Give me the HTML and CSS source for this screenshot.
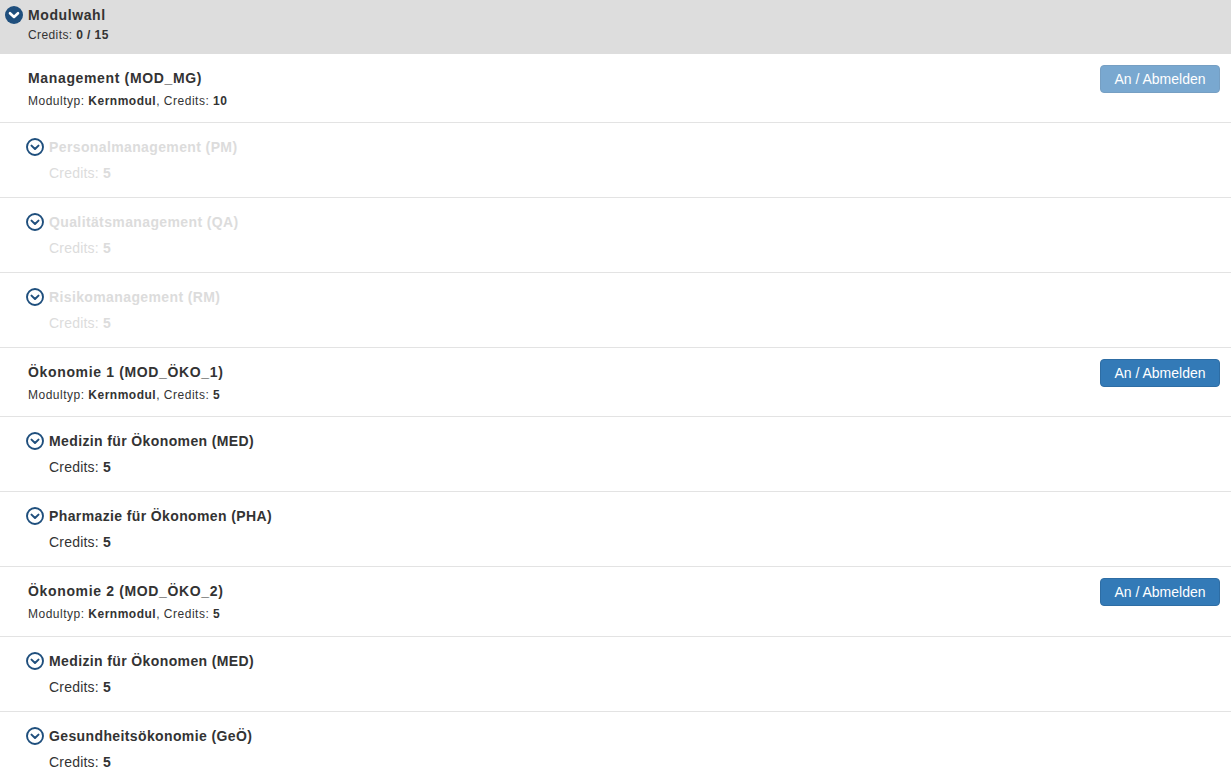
FILE: index.html
```html
<!DOCTYPE html>
<html lang="de">
<head>
<meta charset="utf-8">
<title>Modulwahl</title>
<link rel="stylesheet" href="styles.css">
</head>
<body>
<div class="panel">
  <div class="panel-head">
    <div class="head-title">
      <svg class="icon-solid" width="18" height="18" viewBox="0 0 18 18"><circle cx="9" cy="9" r="9" fill="#1f4f7d"/><path d="M5 7.2 L9 11 L13 7.2" fill="none" stroke="#fff" stroke-width="2.6" stroke-linecap="round" stroke-linejoin="round"/></svg>
      <span>Modulwahl</span>
    </div>
    <div class="head-sub">Credits: <b>0 / 15</b></div>
  </div>

  <div class="module">
    <div class="module-info">
      <div class="module-title">Management (MOD_MG)</div>
      <div class="module-sub">Modultyp: <b>Kernmodul</b>, Credits: <b>10</b></div>
    </div>
    <button class="btn disabled">An / Abmelden</button>
  </div>
  <div class="course muted">
    <div class="course-title"><svg class="icon-outline" width="18" height="18" viewBox="0 0 18 18"><circle cx="9" cy="9" r="8" fill="none" stroke="#1f4f7d" stroke-width="1.9"/><path d="M5.5 7.6 L9 11 L12.5 7.6" fill="none" stroke="#1f4f7d" stroke-width="2" stroke-linecap="round" stroke-linejoin="round"/></svg><span>Personalmanagement (PM)</span></div>
    <div class="course-sub">Credits: <b>5</b></div>
  </div>
  <div class="course muted">
    <div class="course-title"><svg class="icon-outline" width="18" height="18" viewBox="0 0 18 18"><circle cx="9" cy="9" r="8" fill="none" stroke="#1f4f7d" stroke-width="1.9"/><path d="M5.5 7.6 L9 11 L12.5 7.6" fill="none" stroke="#1f4f7d" stroke-width="2" stroke-linecap="round" stroke-linejoin="round"/></svg><span>Qualitätsmanagement (QA)</span></div>
    <div class="course-sub">Credits: <b>5</b></div>
  </div>
  <div class="course muted">
    <div class="course-title"><svg class="icon-outline" width="18" height="18" viewBox="0 0 18 18"><circle cx="9" cy="9" r="8" fill="none" stroke="#1f4f7d" stroke-width="1.9"/><path d="M5.5 7.6 L9 11 L12.5 7.6" fill="none" stroke="#1f4f7d" stroke-width="2" stroke-linecap="round" stroke-linejoin="round"/></svg><span>Risikomanagement (RM)</span></div>
    <div class="course-sub">Credits: <b>5</b></div>
  </div>

  <div class="module">
    <div class="module-info">
      <div class="module-title">Ökonomie 1 (MOD_ÖKO_1)</div>
      <div class="module-sub">Modultyp: <b>Kernmodul</b>, Credits: <b>5</b></div>
    </div>
    <button class="btn">An / Abmelden</button>
  </div>
  <div class="course">
    <div class="course-title"><svg class="icon-outline" width="18" height="18" viewBox="0 0 18 18"><circle cx="9" cy="9" r="8" fill="none" stroke="#1f4f7d" stroke-width="1.9"/><path d="M5.5 7.6 L9 11 L12.5 7.6" fill="none" stroke="#1f4f7d" stroke-width="2" stroke-linecap="round" stroke-linejoin="round"/></svg><span>Medizin für Ökonomen (MED)</span></div>
    <div class="course-sub">Credits: <b>5</b></div>
  </div>
  <div class="course">
    <div class="course-title"><svg class="icon-outline" width="18" height="18" viewBox="0 0 18 18"><circle cx="9" cy="9" r="8" fill="none" stroke="#1f4f7d" stroke-width="1.9"/><path d="M5.5 7.6 L9 11 L12.5 7.6" fill="none" stroke="#1f4f7d" stroke-width="2" stroke-linecap="round" stroke-linejoin="round"/></svg><span>Pharmazie für Ökonomen (PHA)</span></div>
    <div class="course-sub">Credits: <b>5</b></div>
  </div>

  <div class="module module-last">
    <div class="module-info">
      <div class="module-title">Ökonomie 2 (MOD_ÖKO_2)</div>
      <div class="module-sub">Modultyp: <b>Kernmodul</b>, Credits: <b>5</b></div>
    </div>
    <button class="btn">An / Abmelden</button>
  </div>
  <div class="course">
    <div class="course-title"><svg class="icon-outline" width="18" height="18" viewBox="0 0 18 18"><circle cx="9" cy="9" r="8" fill="none" stroke="#1f4f7d" stroke-width="1.9"/><path d="M5.5 7.6 L9 11 L12.5 7.6" fill="none" stroke="#1f4f7d" stroke-width="2" stroke-linecap="round" stroke-linejoin="round"/></svg><span>Medizin für Ökonomen (MED)</span></div>
    <div class="course-sub">Credits: <b>5</b></div>
  </div>
  <div class="course">
    <div class="course-title"><svg class="icon-outline" width="18" height="18" viewBox="0 0 18 18"><circle cx="9" cy="9" r="8" fill="none" stroke="#1f4f7d" stroke-width="1.9"/><path d="M5.5 7.6 L9 11 L12.5 7.6" fill="none" stroke="#1f4f7d" stroke-width="2" stroke-linecap="round" stroke-linejoin="round"/></svg><span>Gesundheitsökonomie (GeÖ)</span></div>
    <div class="course-sub">Credits: <b>5</b></div>
  </div>
</div>
</body>
</html>
```

FILE: styles.css
```css
* { box-sizing: border-box; }
html, body { margin: 0; padding: 0; background: #fff; }
body {
  font-family: "Liberation Sans", Arial, Helvetica, sans-serif;
  color: #333;
  font-size: 14px;
}
b { font-weight: bold; }

.panel { width: 1231px; }

.panel-head {
  background: #dddddd;
  height: 54px;
  padding: 5px 0 0 5px;
}
.head-title {
  display: flex;
  align-items: center;
  gap: 5px;
  height: 20px;
  font-size: 14px;
  font-weight: bold;
  letter-spacing: 0.6px;
}
.icon-solid { display: block; flex: none; }
.head-sub {
  margin-top: 2px;
  padding-left: 23px;
  font-size: 12px;
  line-height: 16px;
  letter-spacing: 0.4px;
}

.module {
  display: flex;
  justify-content: space-between;
  align-items: flex-start;
  padding: 14px 11px 13px 28px;
  border-bottom: 1px solid #e3e3e3;
  height: 69px;
}
.module-last { height: 70px; }
.module-title {
  font-size: 14px;
  font-weight: bold;
  line-height: 20px;
  letter-spacing: 0.65px;
}
.module-sub {
  margin-top: 5px;
  font-size: 12px;
  line-height: 16px;
  letter-spacing: 0.5px;
}

.btn {
  margin-top: -3px;
  width: 120px;
  height: 28px;
  padding: 0 12px;
  font-family: inherit;
  font-size: 14px;
  color: #fff;
  background: #337ab7;
  border: 1px solid #2e6da4;
  border-radius: 4px;
  cursor: pointer;
}
.btn.disabled {
  opacity: 0.65;
  cursor: not-allowed;
}

.course {
  padding: 14px 0 0 26px;
  border-bottom: 1px solid #e3e3e3;
  height: 75px;
}
.course-title {
  display: flex;
  align-items: center;
  gap: 5px;
  height: 20px;
  font-size: 14px;
  font-weight: bold;
  letter-spacing: 0.38px;
}
.icon-outline { display: block; flex: none; }
.course-sub {
  margin-top: 7px;
  padding-left: 23px;
  font-size: 14px;
  line-height: 18px;
  letter-spacing: 0.2px;
}
.course.muted .course-title span,
.course.muted .course-sub {
  color: #dcdcdc;
}
```
